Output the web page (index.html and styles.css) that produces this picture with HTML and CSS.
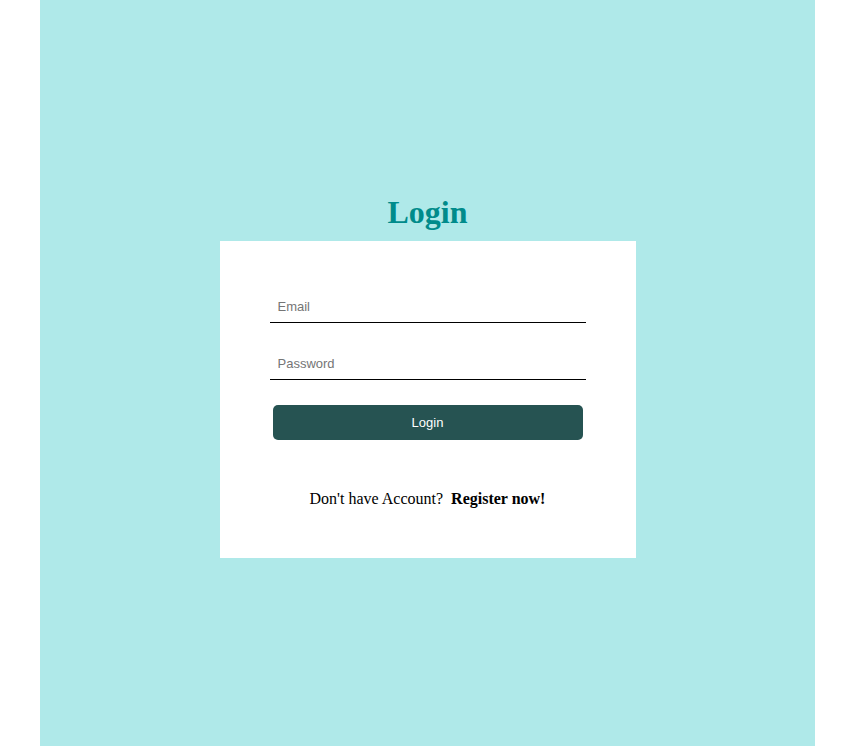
FILE: index.html
```html
<!DOCTYPE html>
<html lang="en">
<head>
<meta charset="utf-8">
<title>Login</title>
<link rel="stylesheet" href="styles.css">
</head>
<body>
<main class="page">
  <h1 class="title">Login</h1>
  <div class="card">
    <form class="form">
      <input class="field field-email" type="email" placeholder="Email">
      <input class="field field-password" type="password" placeholder="Password">
      <button class="btn" type="button">Login</button>
      <p class="register">Don't have Account?&nbsp; <b>Register now!</b></p>
    </form>
  </div>
</main>
</body>
</html>
```
FILE: styles.css
```css
html, body {
  margin: 0;
  padding: 0;
  background: #ffffff;
}
.page {
  box-sizing: border-box;
  margin-left: 40px;
  width: 775px;
  height: 746px;
  background: #afe9e9;
  padding-top: 194px;
  display: flex;
  flex-direction: column;
  align-items: center;
  font-family: "Liberation Serif", "Times New Roman", serif;
}
.title {
  margin: 0 0 10px;
  font-size: 32px;
  line-height: 37px;
  font-weight: bold;
  color: #008b8b;
}
.card {
  box-sizing: border-box;
  width: 416px;
  height: 317px;
  background: #ffffff;
  padding: 0 50px;
}
.form {
  display: flex;
  flex-direction: column;
}
.field {
  box-sizing: border-box;
  display: block;
  width: 316px;
  height: 30px;
  margin: 0;
  padding: 0 8px 2px;
  border: none;
  border-bottom: 1px solid #000000;
  outline: none;
  background: transparent;
  font-family: "Liberation Sans", Arial, sans-serif;
  font-size: 13px;
  color: #000;
}
.field::placeholder {
  color: #757575;
}
.field-email {
  margin-top: 52px;
}
.field-password {
  margin-top: 27px;
}
.btn {
  box-sizing: border-box;
  margin: 25px 3px 0;
  width: 310px;
  height: 35px;
  border: none;
  border-radius: 5px;
  background: #265352;
  color: #ffffff;
  font-family: "Liberation Sans", Arial, sans-serif;
  font-size: 13px;
  cursor: pointer;
}
.register {
  margin: 50px 0 0;
  text-align: center;
  font-size: 16px;
  line-height: 18px;
  color: #000;
}
```
